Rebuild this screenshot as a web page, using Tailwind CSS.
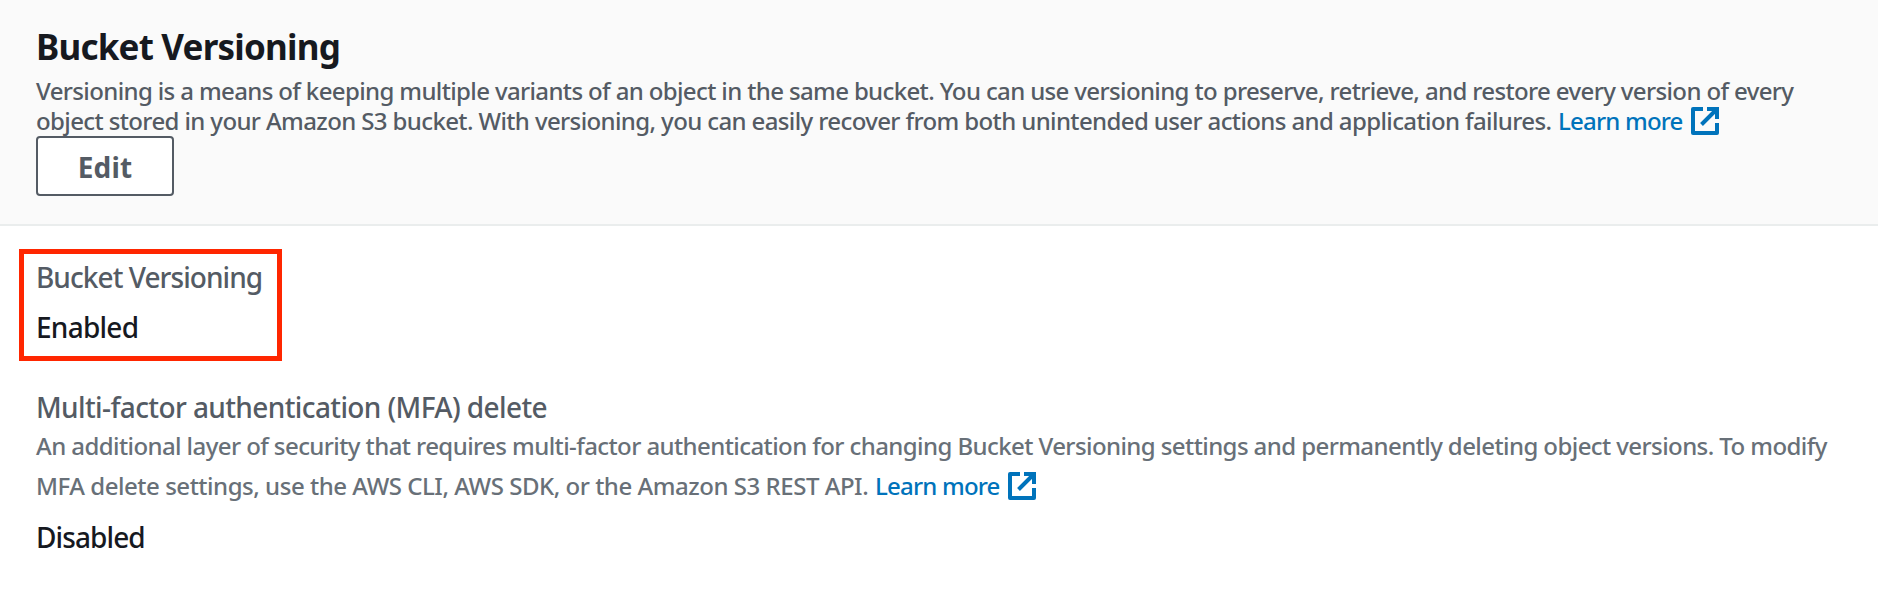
<!DOCTYPE html>
<html lang="en">
<head>
<meta charset="utf-8">
<title>Bucket Versioning</title>
<script src="https://cdn.jsdelivr.net/npm/@tailwindcss/browser@4"></script>
</head>
<body class="min-h-screen bg-white font-['Noto_Sans',sans-serif] whitespace-nowrap text-[#16191f]">
<header class="h-[226px] border-b-2 border-[#eaeded] bg-[#fafafa] px-9 pt-[25px]">
  <h1 class="text-[35px] leading-[44px] font-bold tracking-[-0.8px]">Bucket Versioning</h1>
  <div class="mt-[7px] text-2xl leading-[30px] font-medium text-[#545b64]">
    <p class="tracking-[-0.634px]">Versioning is a means of keeping multiple variants of an object in the same bucket. You can use versioning to preserve, retrieve, and restore every version of every</p>
    <div class="flex h-[30px]">
      <p class="w-[1522px] tracking-[-0.62px]">object stored in your Amazon S3 bucket. With versioning, you can easily recover from both unintended user actions and application failures.</p>
      <a class="flex text-[#0073bb]"><span class="w-[133px] tracking-[-0.8px]">Learn more</span>
        <svg class="mt-px size-7" viewBox="0 0 28 28" fill="none" stroke="currentColor" stroke-width="4"><path d="M12 2H2V26H26V16" stroke-linejoin="round"/><path d="M16 2H26V12M26 2L10.5 17.5"/></svg>
      </a>
    </div>
  </div>
  <button class="flex h-[60px] w-[138px] items-center justify-center rounded-[4px] border-2 border-[#545b64] bg-white pt-px text-[28px] leading-[56px] font-bold tracking-[0.1px] text-[#545b64]">Edit</button>
</header>
<main class="text-[28px] leading-10 font-medium">
  <section class="mt-[23px] ml-[19px] h-28 w-[263px] border-5 border-[#ff2600] pt-[3px] pl-3">
    <h2 class="font-medium tracking-[-0.94px] text-[#545b64]">Bucket Versioning</h2>
    <p class="mt-2.5 tracking-[-0.75px]">Enabled</p>
  </section>
  <section class="mt-[25px] px-9">
    <h2 class="pt-px font-medium tracking-[-0.61px] text-[#545b64]">Multi-factor authentication (MFA) delete</h2>
    <div class="-mt-px text-2xl leading-10 font-medium text-[#687078]">
      <p class="tracking-[-0.585px]">An additional layer of security that requires multi-factor authentication for changing Bucket Versioning settings and permanently deleting object versions. To modify</p>
      <div class="flex h-10">
        <p class="w-[839px] tracking-[-0.47px]">MFA delete settings, use the AWS CLI, AWS SDK, or the Amazon S3 REST API.</p>
        <a class="flex text-[#0073bb]"><span class="w-[133px] tracking-[-0.8px]">Learn more</span>
          <svg class="mt-1.5 size-7" viewBox="0 0 28 28" fill="none" stroke="currentColor" stroke-width="4"><path d="M12 2H2V26H26V16" stroke-linejoin="round"/><path d="M16 2H26V12M26 2L10.5 17.5"/></svg>
        </a>
      </div>
    </div>
    <p class="mt-[11px] tracking-[-0.9px]">Disabled</p>
  </section>
</main>
</body>
</html>
